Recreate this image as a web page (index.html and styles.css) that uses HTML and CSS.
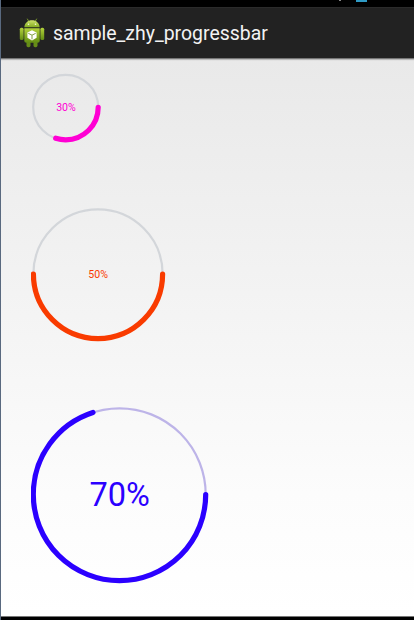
FILE: index.html
```
<!DOCTYPE html>
<html lang="en">
<head>
<meta charset="utf-8">
<title>sample_zhy_progressbar</title>
<link rel="stylesheet" href="styles.css">
</head>
<body>
<div class="screen">
  <div class="status"><span class="signal"></span><span class="battery"></span></div>
  <header class="bar">
    <svg class="logo" width="26" height="30" viewBox="0 0 26 30">
      <defs>
        <linearGradient id="g" x1="0" y1="0" x2="0" y2="1"><stop offset="0" stop-color="#b4d33c"/><stop offset="1" stop-color="#618c12"/></linearGradient>
        <linearGradient id="head" x1="0" y1="0" x2="0" y2="1"><stop offset="0" stop-color="#cce16a"/><stop offset="1" stop-color="#83ab20"/></linearGradient>
      </defs>
      <path d="M8.4 1l1.5 2.5M17.6 1l-1.5 2.5" stroke="#82a32d" stroke-width=".9" stroke-linecap="round"/>
      <path d="M5.3 9.3C5.6 5 8.8 2.3 13 2.3s7.4 2.700 7.700 7z" fill="url(#head)"/>
      <circle cx="9.500" cy="6.300" r=".8" fill="#f4f8df"/><circle cx="16.500" cy="6.300" r=".8" fill="#f4f8df"/>
      <rect x=".8" y="9.800" width="3.800" height="12.200" rx="1.500" fill="url(#g)"/>
      <rect x="21.400" y="9.800" width="3.800" height="12.200" rx="1.500" fill="url(#g)"/>
      <rect x="7.500" y="20" width="4" height="9.200" rx="1.600" fill="#668d18"/>
      <rect x="14.500" y="20" width="4" height="9.200" rx="1.600" fill="#668d18"/>
      <path d="M5.300 10.200h15.400v12.600q0 2-2 2H7.300q-2 0-2-2z" fill="url(#g)"/>
      <path d="M13 12.200l4.600 2.300v5.300L13 22.600l-4.600-2.800v-5.300z" fill="#fff"/>
      <path d="M9.300 15.300L13 17.200l3.700-1.900M13 17.200v4.200" fill="none" stroke="#829e45" stroke-width="1"/>
    </svg>
    <h1 class="title">sample_zhy_progressbar</h1>
  </header>
  <main class="content">
    <svg class="ring pink" width="72" height="72" viewBox="0 0 72 72">
      <circle class="track" cx="34.700" cy="36.300" r="32.500"/>
      <circle class="value" cx="34.700" cy="36.300" r="32.500" pathLength="100" stroke-dasharray="30 100"/>
      <text x="35" y="40">30%</text>
    </svg>
    <svg class="ring orange" width="136" height="136" viewBox="0 0 136 136">
      <circle class="track" cx="67" cy="68" r="64.600"/>
      <circle class="value" cx="67" cy="68" r="64.600" pathLength="100" stroke-dasharray="50 100"/>
      <text x="67.200" y="72">50%</text>
    </svg>
    <svg class="ring blue" width="180" height="180" viewBox="0 0 180 180">
      <circle class="track" cx="88.500" cy="90.500" r="86.200"/>
      <circle class="value" cx="88.500" cy="90.500" r="86.200" pathLength="100" stroke-dasharray="70 100"/>
      <text x="88.700" y="102">70%</text>
    </svg>
  </main>
</div>
</body>
</html>
```
FILE: styles.css
```
body { margin: 0; background: #000; font-family: Roboto, sans-serif; }
.screen {
  box-sizing: border-box;
  height: 620px;
  border-left: 1px solid #59697f;
  overflow: hidden;
  display: flex;
  flex-direction: column;
}
.status { height: 7px; flex: none; background: #000; display: flex; align-items: flex-start; gap: 15px; padding-left: 338px; }
.signal { width: 2px; height: 1px; background: #888; }
.battery { width: 11px; height: 2px; background: #2f9ac4; }
.bar {
  box-sizing: border-box;
  height: 52px;
  flex: none;
  display: flex;
  align-items: center;
  gap: 8px;
  padding-left: 18px;
  background: #222;
  border-top: 1px solid #2b2b2b;
  border-bottom: 1px solid #777;
  box-shadow: 0 1px 1px #bbb;
  position: relative;
}
.logo { display: block; margin: 0 0 1px -0.5px; }
.title { margin: 0; padding: 2px 0 0 0.5px; font-size: 19.45px; line-height: 24px; font-weight: 400; color: #f3f3f3; }
.content {
  box-sizing: border-box;
  height: 558px;
  flex: none;
  padding: 12px 30px 0;
  display: flex;
  flex-direction: column;
  align-items: flex-start;
  background: linear-gradient(#e9e9e9, #f3f3f3 42%, #fcfcfc 78%, #fff);
  border-bottom: 1px solid #777;
}
.ring { display: block; flex: none; }
.orange { margin-top: 63px; }
.blue { margin-top: 62px; }
.track { fill: none; stroke: #d3d6da; stroke-width: 2.2; }
.value { fill: none; stroke-width: 5.2; stroke-linecap: round; }
.ring text { font-size: 10.6px; text-anchor: middle; }
.pink .value { stroke: #ff00d4; }
.pink text { fill: #ff00d4; }
.orange .value { stroke: #f93b00; }
.orange text { fill: #f93b00; }
.blue .track { stroke: #bdb4e8; }
.blue .value { stroke: #2b00ff; }
.blue text { fill: #2b00ff; font-size: 32.5px; }
```
